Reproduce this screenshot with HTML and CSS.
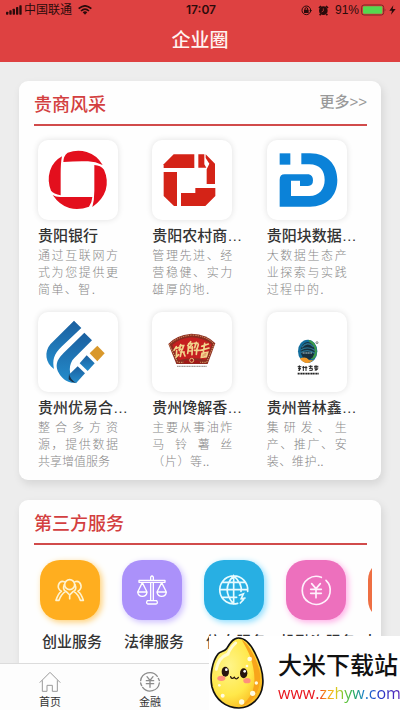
FILE: index.html
```html
<!DOCTYPE html>
<html lang="zh-CN">
<head>
<meta charset="utf-8">
<meta name="viewport" content="width=device-width, initial-scale=1">
<title>企业圈</title>
<link rel="stylesheet" href="styles.css">
</head>
<body>
<div class="app">
  <header class="top">
    <div class="status">
      <div class="status-left">
        <svg class="signal" width="16" height="10" viewBox="0 0 48 30"><rect x="0" y="20" width="7" height="9" rx="2"/><rect x="10" y="16" width="7" height="13" rx="2"/><rect x="20" y="11" width="7" height="18" rx="2"/><rect x="30" y="6" width="7" height="23" rx="2"/><rect x="40" y="1" width="7" height="28" rx="2"/></svg>
        <span>中国联通</span>
        <svg class="wifi" width="14" height="10" viewBox="0 0 42 30"><g fill="none" stroke="#2b0b0b" stroke-width="5"><path d="M2 11Q21-6 40 11"/><path d="M9 18Q21 7 33 18"/></g><path d="M14 22Q21 16 28 22L21 29Z"/></svg>
      </div>
      <time class="clock">17:07</time>
      <div class="status-right">
        <svg width="11" height="11" viewBox="0 0 33 33"><circle cx="16" cy="16" r="13" fill="none" stroke="#2b0b0b" stroke-width="3"/><rect x="9" y="14" width="14" height="10" rx="1"/><path d="M12 15V12a4 4 0 0 1 8 0V15" fill="none" stroke="#2b0b0b" stroke-width="3"/><path d="M25 15H33L29 21Z"/></svg>
        <svg width="11" height="11" viewBox="0 0 33 33"><circle cx="16" cy="17" r="13"/><path d="M3 9L9 3M30 9L24 3M8 27L5 31M25 27L28 31" stroke="#2b0b0b" stroke-width="5"/><path d="M16 10V18L11 21" fill="none" stroke="#de4141" stroke-width="2"/></svg>
        <span class="percent">91%</span>
        <svg width="26" height="12" viewBox="0 0 78 36"><rect x="2" y="3" width="66" height="30" rx="7" fill="none" stroke="#7a2626" stroke-width="3"/><rect x="6" y="7" width="58" height="22" rx="3" fill="#55d84f"/><path d="M71 13Q76 18 71 23Z" fill="#7a2626"/></svg>
        <svg width="7" height="10" viewBox="0 0 21 30"><path d="M13 1L1 17H9L6 29L20 12H11Z"/></svg>
      </div>
    </div>
    <h1>企业圈</h1>
  </header>

  <main>
    <section class="card">
      <div class="card-head">
        <h2>贵商风采</h2>
        <a class="more" href="#">更多&gt;&gt;</a>
      </div>
      <div class="companies">
        <article>
          <svg class="tile" viewBox="54 30 240 240"><g fill="#e30f1d"><path d="M130 96Q130 78 143 68Q172 58 200 66Q231 75 248 105Q226 94 204 94Q168 93 130 96Z"/><path d="M223 105Q242 106 252 119Q266 150 257 181Q247 211 217 231Q223 210 223 182Z"/><path d="M121 201H217Q216 218 207 230Q177 241 148 234Q119 226 98 195Q106 201 121 201Z"/><path d="M126 79Q122 98 122 132V196Q101 191 93 182Q81 151 90 122Q99 94 126 79Z"/></g></svg>
          <h3>贵阳银行</h3>
          <p><span>通过互联网方</span><span>式为您提供更</span><span class="short">简单、智.</span></p>
        </article>
        <article>
          <svg class="tile" viewBox="35 30 240 240"><g fill="#d42317"><path d="M100 73H162V114H70V103Z"/><path d="M174 73H192V103L198 113H174Z"/><path d="M196 73L224 101V162H199V118L207 101L196 84Z"/><path d="M70 126H110V228H101L70 198Z"/><path d="M122 189H165V174H225V198L195 228H122Z"/></g></svg>
          <h3>贵阳农村商…</h3>
          <p><span>管理先进、经</span><span>营稳健、实力</span><span class="short">雄厚的地.</span></p>
        </article>
        <article>
          <svg class="tile" viewBox="49 30 240 240"><g fill="#0b82d8"><rect x="87" y="70" width="32" height="34"/><path d="M152 70H178C231 70 260 105 260 150C260 199 227 230 178 230H87V149Q87 133 102 133H174Q187 136 187 151Q187 168 172 168H148V152H121V198H177C205 198 222 177 222 150C222 122 207 103 176 103H152Z"/></g></svg>
          <h3>贵阳块数据…</h3>
          <p><span>大数据生态产</span><span>业探索与实践</span><span class="short">过程中的.</span></p>
        </article>
        <article>
          <svg class="tile" viewBox="54 36 240 240"><defs><linearGradient id="stroke-blue" x1="0" y1="0" x2="0" y2="1"><stop offset="0" stop-color="#1b5f9f"/><stop offset="1" stop-color="#248dcc"/></linearGradient></defs><g fill="url(#stroke-blue)"><path d="M162 62L184 84L126 139C100 164 97 181 102 207C76 190 72 155 91 133Z"/><path d="M193 98L216 121L163 174C145 191 144 225 166 248C137 253 109 220 110 196C111 181 119 172 130 160Z"/><path d="M200 166L224 190L203 213L179 190Z"/><path d="M173 199L195 220L168 250Q145 237 149 222Z"/></g><path d="M147 221Q150 237 168 249Q154 247 146 238Z" fill="#182f48"/><path d="M232 137L254 160L232 184L209 160Z" fill="#d9982b"/></svg>
          <h3>贵州优易合…</h3>
          <p><span>整合多方资</span><span>源，提供数据</span><span class="plain">共享增值服务</span></p>
        </article>
        <article>
          <svg class="tile" viewBox="35 36 240 240"><path d="M84 132Q105 106 153 101Q202 103 225 130L202 192H108Z" fill="#8c2b20"/><path d="M87 134Q108 111 153 105Q199 107 221 132L199 187H112Z" fill="none" stroke="#d9a66c" stroke-width="3" stroke-dasharray="4 3"/><path d="M96 135Q117 116 153 112Q192 114 214 134L196 179Q153 170 115 181Z" fill="#c51f20"/><g fill="none" stroke="#f1d38b" stroke-width="5" stroke-linecap="round"><path d="M108 140L101 151M108 145L117 142M109 152L108 171L115 164M121 134L117 151M119 137H130L126 148H116M120 156H132M124 151L120 169M129 156L134 168"/><path d="M151 125L142 137M145 131H156L149 140M143 144H157M145 139L142 160M156 140L155 164M144 153H155M162 130H173M168 127L163 143M174 134L171 144M162 151H177M170 145L168 163"/><path d="M184 139L204 132M193 130L189 158M181 151L206 144M185 160L202 157L198 170L183 172ZM188 165H199"/></g><path d="M128 190Q133 177 145 182Q154 171 163 182Q176 178 181 190Z" fill="#a31818"/><circle cx="154" cy="181" r="6" fill="none" stroke="#e9bd77" stroke-width="3"/><path d="M110 199H200" stroke="#a49d9b" stroke-width="4" stroke-dasharray="4 1"/></svg>
          <h3>贵州馋解香…</h3>
          <p><span>主要从事油炸</span><span>马铃薯丝</span><span class="short">（片）等..</span></p>
        </article>
        <article>
          <svg class="tile" viewBox="49 36 240 240"><ellipse cx="171" cy="154" rx="29" ry="35" fill="#126d9c"/><path d="M173 119C193 121 204 149 196 169Q188 181 180 176Q188 140 173 119Z" fill="#3c9c4a"/><ellipse cx="171" cy="153" rx="21" ry="27" fill="#17303e"/><path d="M153 142Q171 121 189 141M150 150Q171 137 193 151M150 158Q171 145 193 160" fill="none" stroke="#2b718e" stroke-width="4"/><path d="M156 159H184" stroke="#b1cad1" stroke-width="3" stroke-dasharray="4 1"/><path d="M148 175Q166 168 174 179Q184 184 191 176Q179 190 168 189Q155 188 148 175Z" fill="#f29a28"/><circle cx="199" cy="128" r="3" fill="none" stroke="#555" stroke-width="2"/><g fill="none" stroke="#222" stroke-width="3"><path d="M141 200H152M146 196V213M142 205H151M143 211L150 207M158 198V213M155 202H163M166 198V213M163 203H170M174 199H186M180 196V204M175 205H186M176 211H185V206M190 199H203M196 196V213M190 204H203M192 210L202 207"/><path d="M141 221H204" stroke-width="5" stroke-dasharray="4 1"/></g></svg>
          <h3>贵州普林鑫…</h3>
          <p><span>集研发、生</span><span>产、推广、安</span><span class="short">装、维护..</span></p>
        </article>
      </div>
    </section>

    <section class="card services-card">
      <div class="card-head">
        <h2>第三方服务</h2>
      </div>
      <div class="services">
        <a class="service" href="#">
          <svg class="badge orange" viewBox="120 240 180 180"><g fill="none" stroke="#fff3cf" stroke-width="5" stroke-linecap="round" stroke-linejoin="round"><circle cx="209" cy="314" r="15"/><path d="M193 305Q181 301 176 313Q171 326 184 334Q174 341 168 361H177Q183 343 197 334Q187 329 193 314"/><path d="M225 305Q237 301 242 313Q247 326 234 334Q244 341 250 361H241Q235 343 221 334Q231 329 225 314"/><path d="M199 335L209 345L219 335M209 345V356"/></g></svg>
          <span>创业服务</span>
        </a>
        <a class="service" href="#">
          <svg class="badge purple" viewBox="366 240 180 180"><g fill="none" stroke="#fff" stroke-width="4" stroke-linecap="round" stroke-linejoin="round"><path d="M452 300V291Q456 285 460 291V300M417 301H495V307H417ZM452 308V361M460 308V361M442 362H470Q475 370 468 372H444Q437 370 442 362ZM427 308L413 336H441ZM413 337Q416 349 427 349Q439 349 441 337M485 308L471 336H499ZM471 337Q474 349 485 349Q497 349 499 337"/></g></svg>
          <span>法律服务</span>
        </a>
        <a class="service" href="#">
          <svg class="badge blue" viewBox="42 240 180 180"><g fill="none" stroke="#e6fbff" stroke-width="5" stroke-linecap="round"><path d="M143 370A42 42 0 1 1 173 334M131 287V372M90 329H173M96 307H167M96 352H140M131 287Q92 329 131 372M131 287Q158 313 153 334"/><path d="M148 346L160 342L153 357M153 357L165 354M161 358L151 369"/></g></svg>
          <span>信息服务</span>
        </a>
        <a class="service" href="#">
          <svg class="badge pink" viewBox="288 240 180 180"><g fill="none" stroke="#fff0fc" stroke-width="5" stroke-linecap="round"><path d="M394 292A42 42 0 1 0 408 301"/><path d="M365 311L378 326L391 311M378 326V353M362 328H394M362 340H394"/></g></svg>
          <span>投融资服务</span>
        </a>
        <a class="service" href="#">
          <svg class="badge coral" viewBox="0 0 180 180"></svg>
          <span>大数据服务</span>
        </a>
      </div>
    </section>
  </main>

  <nav class="tabs">
    <a href="#"><svg width="22" height="22" viewBox="0 0 66 66"><path d="M3 34L33 4L63 34M10 29V61H24V43H40V61H55V29" fill="none" stroke="#999" stroke-width="3" stroke-linejoin="round" stroke-linecap="round"/></svg><span>首页</span></a>
    <a href="#"><svg width="22" height="22" viewBox="0 0 66 66"><g fill="none" stroke="#8d8d8d" stroke-width="4" stroke-linecap="round"><path d="M5 29A28 28 0 0 1 55 16M61 29A28 28 0 0 0 58 22M61 36A28 28 0 0 1 11 49M5 36A28 28 0 0 0 8 44"/><path d="M24 17L33 28L42 17M33 28V49M22 29H44M22 38H44"/></g></svg><span>金融</span></a>
  </nav>

  <aside class="mark">
    <svg class="egg" width="54" height="72" viewBox="0 0 162 216">
      <defs><radialGradient id="shell" cx=".35" cy=".4" r=".7"><stop offset="0" stop-color="#fff58a"/><stop offset=".6" stop-color="#ffe84a"/><stop offset="1" stop-color="#f9b51b"/></radialGradient></defs>
      <path d="M85 3C105 3 120 18 134 46C150 77 162 112 158 144C154 184 123 212 87 213C47 213 16 187 6 150C-1 117 6 74 24 51C31 42 41 45 50 35C58 21 68 3 85 3Z" fill="url(#shell)" stroke="#111" stroke-width="5"/>
      <path d="M95 8C113 16 138 60 148 99C160 154 128 202 91 208C134 178 138 136 130 94C124 57 110 35 95 8Z" fill="#f8a51b"/>
      <path d="M77 18Q59 35 54 51Q25 62 19 97" fill="none" stroke="#fffbd1" stroke-width="9" stroke-linecap="round"/>
      <g fill="#fffbe2"><circle cx="119" cy="66" r="7"/><circle cx="139" cy="138" r="5"/><circle cx="128" cy="169" r="8"/><circle cx="95" cy="195" r="8"/><circle cx="38" cy="176" r="6"/><circle cx="28" cy="145" r="4"/><circle cx="111" cy="87" r="4"/></g>
      <g fill="#27150e"><ellipse cx="46" cy="104" rx="11" ry="15"/><ellipse cx="101" cy="109" rx="11" ry="15"/></g>
      <g fill="#fff"><circle cx="49" cy="98" r="4"/><circle cx="104" cy="103" r="4"/></g>
      <path d="M62 119Q65 128 73 121Q79 130 85 121" fill="none" stroke="#27150e" stroke-width="4" stroke-linecap="round"/>
      <ellipse cx="34" cy="124" rx="12" ry="8" fill="#ff8f7c"/><ellipse cx="111" cy="131" rx="11" ry="8" fill="#ff8f7c"/>
    </svg>
    <div class="mark-text">
      <strong>大米下载站</strong>
      <span>www.zzhyw.com</span>
    </div>
  </aside>
</div>
</body>
</html>
```
FILE: styles.css
```css
* {
  box-sizing: border-box;
}

body,
h1,
h2,
h3,
p {
  margin: 0;
}

body {
  font-family: "Liberation Sans", "Noto Sans CJK SC", sans-serif;
  color: #333;
  background: #ededed;
}

a {
  color: inherit;
  text-decoration: none;
}

.app {
  position: relative;
  display: flex;
  flex-direction: column;
  height: 100vh;
  overflow: hidden;
}

/* Header */
.top {
  flex: none;
  background: #de4141;
}

.status {
  display: grid;
  grid-template-columns: 1fr auto 1fr;
  align-items: center;
  height: 20px;
  padding: 0 4px 0 6px;
  font-size: 12px;
  line-height: 20px;
  color: #2b0b0b;
  fill: #2b0b0b;
}

.status-left,
.status-right {
  display: flex;
  align-items: center;
}

.status-left {
  gap: 2px;
}

.wifi {
  margin-left: 4px;
}

.status-right {
  justify-content: flex-end;
  gap: 2px;
}

.status-right svg:nth-child(2) {
  margin: 0 4px;
}

.clock {
  font-family: Inter, sans-serif;
  font-weight: 600;
}

h1 {
  height: 42px;
  font-size: 19px;
  font-weight: 500;
  line-height: 42px;
  text-align: center;
  color: #fff3f0;
}

/* Cards */
main {
  flex: 1;
  min-height: 0;
  padding: 19px 19px 0;
  overflow-y: auto;
  scrollbar-width: none;
}

.card {
  margin-bottom: 20px;
  padding-bottom: 9px;
  border-radius: 9px;
  background: #fefefe;
  box-shadow: 2px 4px 8px rgba(0, 0, 0, 0.1);
}

.card-head {
  display: flex;
  justify-content: space-between;
  height: 45px;
  margin: 0 14px 0 15px;
  border-bottom: 2px solid #d14b4b;
}

h2 {
  font-size: 18px;
  font-weight: 500;
  line-height: 48px;
  color: #d33f40;
}

.more {
  font-size: 15px;
  font-weight: 500;
  line-height: 42px;
  color: #999;
}

.companies {
  display: grid;
  grid-template-columns: repeat(3, 1fr);
  row-gap: 13px;
  padding: 14px 0 0 19px;
}

.tile {
  display: block;
  width: 80px;
  height: 80px;
  border-radius: 10px;
  background: #fff;
  box-shadow: 0 0 6px rgba(0, 0, 0, 0.12);
}

h3 {
  margin-top: 4px;
  font-size: 15px;
  font-weight: 500;
  line-height: 24px;
  white-space: nowrap;
}

.companies p {
  width: 80px;
  font-size: 12px;
  font-weight: 300;
  line-height: 17px;
  color: #888;
}

.companies p span {
  display: block;
  text-align: justify;
  text-align-last: justify;
  white-space: nowrap;
}

.companies p .short {
  width: 57px;
}

.companies p .plain {
  text-align-last: left;
}

/* Services */
.services-card {
  margin-bottom: 0;
  padding-bottom: 20px;
}

.services {
  display: flex;
  margin: 0 9px 0 12px;
  padding-top: 15px;
  overflow: hidden;
}

.service {
  display: flex;
  flex: none;
  flex-direction: column;
  align-items: center;
  width: 82px;
  font-size: 15px;
  font-weight: 500;
  line-height: 24px;
}

.badge {
  width: 60px;
  height: 60px;
  margin: 0 4px 10px 0;
  border-radius: 20px;
}

.orange {
  background: #ffae1f;
  box-shadow: 2px 2px 6px #ffce70;
}

.purple {
  background: #ab91fa;
  box-shadow: 2px 2px 6px #cbbcff;
}

.blue {
  background: #28afe3;
  box-shadow: 2px 2px 6px #86dcff;
}

.pink {
  background: #ed70bd;
  box-shadow: 2px 2px 6px #ffa9e5;
}

.coral {
  background: #ee6f43;
}

/* Bottom navigation */
.tabs {
  display: grid;
  flex: none;
  grid-template-columns: repeat(4, 1fr);
  height: 47px;
  border-top: 1px solid #dcdcdc;
  background: #fdfdfd;
}

.tabs a {
  display: flex;
  flex-direction: column;
  align-items: center;
  padding-top: 7px;
  font-size: 11px;
  line-height: 18px;
}

/* Corner banner */
.mark {
  position: absolute;
  right: 0;
  bottom: 0;
  display: flex;
  gap: 14px;
  width: 191px;
  height: 74px;
  padding: 1px 0 0 1px;
  background: #fff;
}

.egg {
  flex: none;
}

.mark-text {
  display: flex;
  flex-direction: column;
  align-items: flex-start;
  white-space: nowrap;
}

.mark-text strong {
  margin-top: 12px;
  font-size: 24px;
  font-weight: 500;
  line-height: 34px;
  color: #111;
}

.mark-text span {
  font-family: "Open Sans", sans-serif;
  font-size: 16px;
  font-weight: 400;
  line-height: 20px;
  color: transparent;
  background: linear-gradient(90deg, #e8141c 0 32%, #f58a1c 38%, #f4c81c 46%, #6cc832 54%, #20a860 62%, #1b7fd0 70%, #2038c8 82%, #5b24b8 100%);
  background-clip: text;
}
```
